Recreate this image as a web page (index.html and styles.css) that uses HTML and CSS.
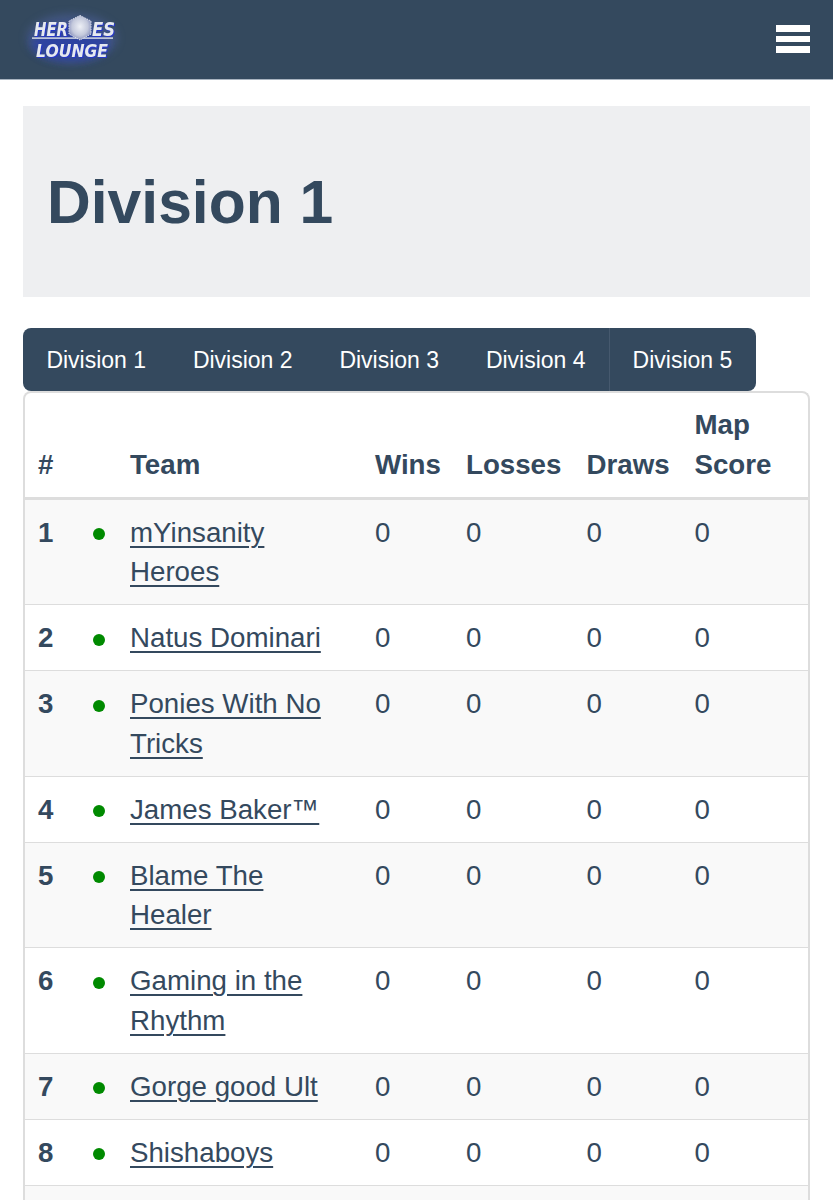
FILE: index.html
```html
<!DOCTYPE html>
<html lang="en">
<head>
<meta charset="utf-8">
<title>Division 1</title>
<link rel="stylesheet" href="styles.css">
</head>
<body>
<header class="navbar">
  <a class="logo" href="#" aria-label="Heroes Lounge">
    <svg class="logo-art" width="100" height="60" viewBox="25 8 100 60" xmlns="http://www.w3.org/2000/svg">
      <defs>
        <filter id="glow" x="-30%" y="-40%" width="160%" height="180%"><feGaussianBlur stdDeviation="4"/></filter>
        <radialGradient id="gem" cx="50%" cy="45%" r="60%">
          <stop offset="0" stop-color="#eef0f6"/>
          <stop offset="0.6" stop-color="#c4c9dc"/>
          <stop offset="1" stop-color="#7f88b8"/>
        </radialGradient>
      </defs>
      <ellipse class="logo-halo" cx="72" cy="38" rx="45" ry="24" filter="url(#glow)"/>
      <ellipse class="logo-core" cx="70" cy="44" rx="38" ry="17" filter="url(#glow)"/>
      <g class="logo-face">
        <text class="logo-top" x="34" y="35.5" textLength="34" lengthAdjust="spacingAndGlyphs">HER</text>
        <text class="logo-top" x="92" y="35.5" textLength="23" lengthAdjust="spacingAndGlyphs">ES</text>
        <text class="logo-bottom" x="36" y="57" textLength="72" lengthAdjust="spacingAndGlyphs">LOUNGE</text>
      </g>
      <rect class="logo-rule" x="32" y="37.4" width="81" height="1.4"/>
      <polygon class="logo-gem" points="80,15.5 91,21 91,34 80,40 69,34 69,21" fill="url(#gem)"/>
    </svg>
  </a>
  <button class="burger" aria-label="Menu"><span></span><span></span><span></span></button>
</header>
<main class="page">
  <section class="jumbotron"><h1>Division 1</h1></section>
  <nav class="tabs">
    <a href="#">Division 1</a>
    <a href="#">Division 2</a>
    <a href="#">Division 3</a>
    <a href="#">Division 4</a>
    <a href="#" class="tab-last">Division 5</a>
  </nav>
  <div class="card">
    <table class="standings">
      <colgroup>
        <col class="c-rank"><col class="c-dot"><col class="c-team"><col class="c-wins"><col class="c-losses"><col class="c-draws"><col class="c-score">
      </colgroup>
      <thead>
        <tr><th>#</th><th></th><th>Team</th><th>Wins</th><th>Losses</th><th>Draws</th><th>Map Score</th></tr>
      </thead>
      <tbody>
        <tr><th>1</th><td><i class="dot"></i></td><td><a href="#">mYinsanity Heroes</a></td><td>0</td><td>0</td><td>0</td><td>0</td></tr>
        <tr><th>2</th><td><i class="dot"></i></td><td><a href="#">Natus Dominari</a></td><td>0</td><td>0</td><td>0</td><td>0</td></tr>
        <tr><th>3</th><td><i class="dot"></i></td><td><a href="#">Ponies With No Tricks</a></td><td>0</td><td>0</td><td>0</td><td>0</td></tr>
        <tr><th>4</th><td><i class="dot"></i></td><td><a href="#">James Baker™</a></td><td>0</td><td>0</td><td>0</td><td>0</td></tr>
        <tr><th>5</th><td><i class="dot"></i></td><td><a href="#">Blame The Healer</a></td><td>0</td><td>0</td><td>0</td><td>0</td></tr>
        <tr><th>6</th><td><i class="dot"></i></td><td><a href="#">Gaming in the Rhythm</a></td><td>0</td><td>0</td><td>0</td><td>0</td></tr>
        <tr><th>7</th><td><i class="dot"></i></td><td><a href="#">Gorge good Ult</a></td><td>0</td><td>0</td><td>0</td><td>0</td></tr>
        <tr><th>8</th><td><i class="dot"></i></td><td><a href="#">Shishaboys</a></td><td>0</td><td>0</td><td>0</td><td>0</td></tr>
        <tr class="clipped"><td colspan="7"></td></tr>
      </tbody>
    </table>
  </div>
</main>
</body>
</html>
```
FILE: styles.css
```css
* { box-sizing: border-box; }
html, body { margin: 0; padding: 0; }
body {
  height: 1200px;
  overflow: hidden;
  background: #fff;
  color: #34495e;
  font-family: "Liberation Sans", Arial, sans-serif;
}
.navbar {
  height: 80px;
  background: #34495e;
  border-bottom: 1px solid #a9b4c0;
  display: flex;
  align-items: center;
  justify-content: space-between;
  padding: 0 23px 0 25px;
}
.logo {
  display: block;
  width: 100px;
  height: 60px;
  margin-top: -3px;
}
.logo-art { display: block; overflow: visible; }
.logo-halo { fill: #4c5f9a; opacity: 0.6; }
.logo-core { fill: #2c3fa6; opacity: 0.85; }
.logo-face {
  fill: #e6e9f0;
  filter: drop-shadow(1px 1px 0 #2536c8);
  font-family: "DejaVu Sans", "Liberation Sans", sans-serif;
  font-weight: 700;
  font-style: italic;
}
.logo-top { font-size: 19.5px; }
.logo-bottom { font-size: 18px; }
.logo-rule { fill: #dfe3ec; }
.logo-gem { stroke: #dfe3ec; stroke-width: 1; stroke-dasharray: 1.5 1; }
.burger {
  width: 34px;
  height: 28px;
  margin-top: -1px;
  padding: 0;
  border: 0;
  background: none;
  display: flex;
  flex-direction: column;
  justify-content: space-between;
}
.burger span { display: block; height: 6.7px; background: #fff; }
.page { padding: 26px 23px 0; }
.jumbotron {
  height: 191px;
  background: #eeeff1;
  padding: 0 24px;
  display: flex;
  align-items: center;
}
h1 {
  margin: 0;
  font-size: 60.6px;
  line-height: 66px;
  font-weight: 700;
}
.tabs {
  margin-top: 31px;
  width: 733px;
  height: 63px;
  background: #34495e;
  border-radius: 8px;
  display: flex;
}
.tabs a {
  padding: 1px 23.4px 0;
  color: #fff;
  font-size: 23px;
  line-height: 62px;
  text-decoration: none;
  white-space: nowrap;
}
.tabs .tab-last { border-left: 1px solid #46596e; padding-left: 22.6px; }
.card {
  border: 2px solid #ddd;
  border-bottom: 0;
  border-radius: 8px 8px 0 0;
  overflow: hidden;
}
.standings {
  width: 100%;
  table-layout: fixed;
  border-collapse: collapse;
  font-size: 27.7px;
  line-height: 39.5px;
}
.c-rank { width: 52px; }
.c-dot { width: 40px; }
.c-team { width: 245px; }
.c-wins { width: 91px; }
.c-losses { width: 120.5px; }
.c-draws { width: 108px; }
.standings th, .standings td {
  padding: 13.25px 13px 12.25px;
  text-align: left;
  vertical-align: top;
}
.standings thead th {
  vertical-align: bottom;
  padding-top: 12.25px;
  padding-bottom: 12.25px;
  border-bottom: 3px solid #ddd;
}
.standings tbody tr { border-bottom: 1px solid #ddd; }
.standings tbody tr:nth-child(odd) { background: #f9f9f9; }
.standings a { color: #34495e; text-decoration: underline; text-underline-offset: 4px; text-decoration-thickness: 2px; }
.dot {
  display: block;
  width: 12px;
  height: 12px;
  margin: 15.5px 0 0 3px;
  border-radius: 50%;
  background: #008a00;
}
.clipped td { height: 66px; }
```
